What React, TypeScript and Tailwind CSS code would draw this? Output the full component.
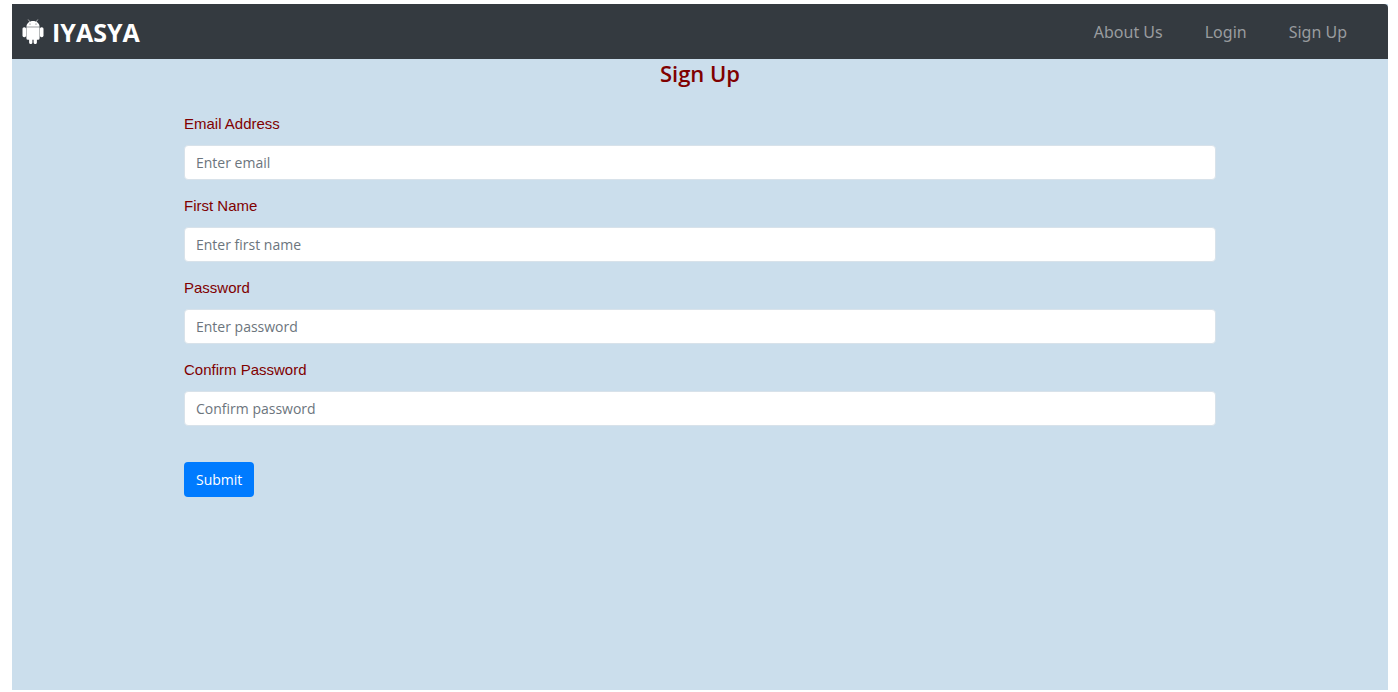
const links = ["About Us", "Login", "Sign Up"];

const fields = [
  { id: "email", label: "Email Address", type: "email", placeholder: "Enter email" },
  { id: "firstName", label: "First Name", type: "text", placeholder: "Enter first name" },
  { id: "password1", label: "Password", type: "password", placeholder: "Enter password" },
  { id: "password2", label: "Confirm Password", type: "password", placeholder: "Confirm password" },
];

function AndroidIcon() {
  return (
    <svg viewBox="0 0 22 25" className="h-[25px] w-[22px]" fill="#fff" aria-hidden="true">
      <path d="M6.4 0.8L8 3M15.6 0.8L14 3" stroke="#fff" strokeWidth="0.6" strokeLinecap="round" />
      <path d="M4.4 7.8C4.6 4.2 7.4 2 11 2S17.4 4.2 17.6 7.8Z" />
      <circle cx="8" cy="5" r="0.5" fill="#343a40" />
      <circle cx="14" cy="5" r="0.5" fill="#343a40" />
      <path d="M4.4 8.2h13.2v11a1.5 1.5 0 0 1-1.5 1.5h-1.2v2.7a1.6 1.6 0 0 1-3.3 0v-2.7h-1.2v2.7a1.6 1.6 0 0 1-3.3 0v-2.7H5.9a1.5 1.5 0 0 1-1.5-1.5Z" />
      <rect x="0.5" y="8.2" width="3.6" height="10" rx="1.6" />
      <rect x="17.9" y="8.2" width="3.6" height="10" rx="1.6" />
    </svg>
  );
}

export default function App() {
  return (
    <div className="flex min-h-screen flex-col bg-white pt-1 pr-[10px] pb-0.5 pl-3 font-['Open_Sans','Noto_Sans',sans-serif]">
      <div className="flex grow flex-col bg-[#cbdeec]">
        <nav className="flex h-[55px] items-center justify-between rounded-tr bg-[#343a40] pr-[41px] pl-[10px]">
          <a href="#" className="flex items-center gap-2 text-[25px] leading-8 font-bold text-white">
            <AndroidIcon />
            IYASYA
          </a>
          <div className="flex items-center gap-[42px]">
            {links.map((link) => (
              <a key={link} href="#" className="font-['Noto_Sans',sans-serif] text-base text-[#999c9f]">
                {link}
              </a>
            ))}
          </div>
        </nav>
        <main className="mx-auto w-3/4">
          <h1 className="text-center text-[22px] leading-7 font-semibold text-[#800000]">Sign Up</h1>
          <form className="pt-[25px]" onSubmit={(e) => e.preventDefault()}>
            <div className="flex flex-col gap-[14px]">
              {fields.map((field) => (
                <div key={field.id} className="flex flex-col gap-[9px]">
                  <label
                    htmlFor={field.id}
                    className="font-['Liberation_Sans',sans-serif] text-[15px] leading-6 text-[#800000]"
                  >
                    {field.label}
                  </label>
                  <input
                    id={field.id}
                    name={field.id}
                    type={field.type}
                    placeholder={field.placeholder}
                    className="h-[35px] w-full rounded border border-[#d8e2ea] bg-white px-[11px] text-sm text-[#495057] placeholder:text-[#6c757d]"
                  />
                </div>
              ))}
            </div>
            <button
              type="submit"
              className="mt-9 h-[35px] rounded bg-[#007bff] px-3 text-sm text-white"
            >
              Submit
            </button>
          </form>
        </main>
      </div>
    </div>
  );
}
